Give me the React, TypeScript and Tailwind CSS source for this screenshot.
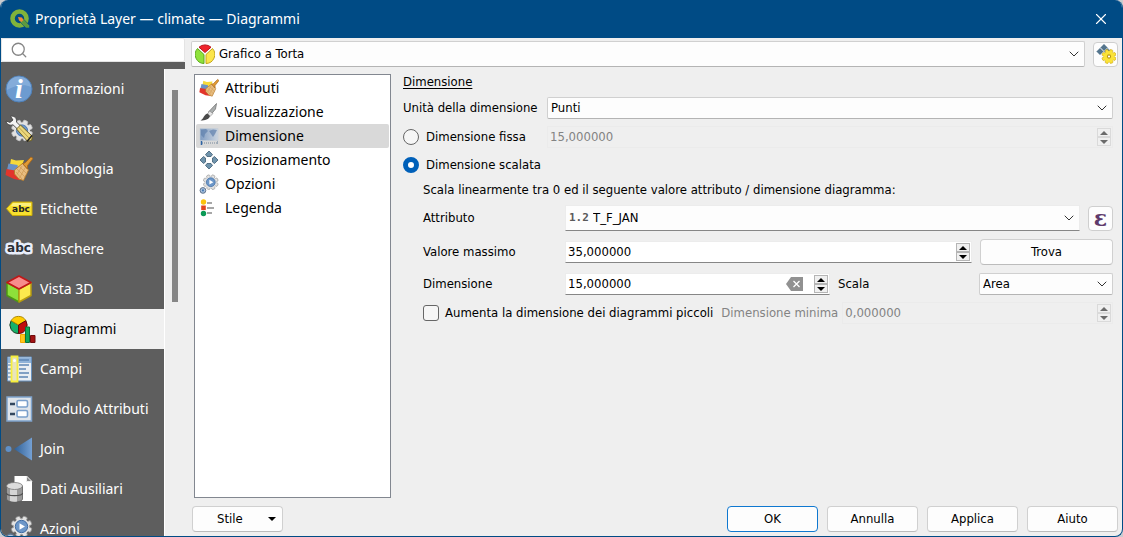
import React, { useState } from 'react';
import { ChevronDown, Search, X } from 'lucide-react';

type IconProps = { className?: string };

type NavItem = {
  label: string;
  icon: React.ReactNode;
};

function InfoIcon() {
  return (
    <svg viewBox="0 0 28 28" className="size-7">
      <circle cx="14" cy="14" r="13" fill="#6d9bd0" stroke="#4f80b8" />
      <path d="M2 15a12 12 0 0 1 24-3c-6-3-16-2-24 3Z" fill="#8fb3de" opacity=".7" />
      <text x="14" y="23" textAnchor="middle" fill="#fff" className="font-['Liberation_Serif',serif] text-[28px] font-bold italic">i</text>
    </svg>
  );
}

const teeth = [0, 45, 90, 135, 180, 225, 270, 315];

function GearShape({ fill, stroke }: { fill: string; stroke: string }) {
  return (
    <g>
      {teeth.map((angle) => (
        <rect key={angle} x="-2.300" y="-10.500" width="4.600" height="5" rx="1.200" fill={fill} stroke={stroke} strokeWidth=".8" transform={`rotate(${angle + 22})`} />
      ))}
      <circle r="8" fill={fill} />
    </g>
  );
}

function SourceIcon() {
  return (
    <svg viewBox="0 0 28 28" className="size-7">
      <g transform="translate(17 15.500)">
        <GearShape fill="#e2e2e2" stroke="#c4c4c4" />
        <circle r="5.600" fill="#6d97c8" stroke="#4f7bb0" />
      </g>
      <path d="M5.500 1.200c4-.6 6.500 1.800 6 5.800l5 5-3 3-5.500-5.200C4.500 11 1.200 9 1 6l4 1.400 3-2.400Z" fill="#f4f4f4" stroke="#444" strokeWidth=".9" />
      <path d="m11.500 14 4-4 12 11.500-1 4-4 .8Z" fill="#ecd77c" stroke="#665a20" strokeWidth=".9" />
      <path d="m14 12.500 10.500 11" stroke="#b8a24a" strokeWidth="1" />
      <path d="m27 20.500-5 6" stroke="#222" strokeWidth="1.500" />
    </svg>
  );
}

function BrushIcon({ className = 'size-7' }: IconProps) {
  return (
    <svg viewBox="0 0 28 28" className={className}>
      <path d="m6 4 5 1.500 8-.5-2 5.500-4 3L5 9.500Z" fill="#f6d93a" />
      <path d="m3.500 8.500 9 1.500.5 3-3 4.500-8-2.500Z" fill="#6a92c6" />
      <path d="m1.500 14 8.500 1.500 7 9-3 .5-5-1L.5 20Z" fill="#e2352b" />
      <path d="m9.500 15 8-6.500 6 6.500-5 10.500-4.500-1.500-4.500-5Z" fill="#e8bd80" stroke="#b77a28" strokeWidth=".9" />
      <path d="m12 14 8 8m-5.500-10.500L22 19m-10 .5 5-8.500m-2.500 12L20 13M11 17l6 7" stroke="#cf9a52" strokeWidth=".7" />
      <path d="m17.500 8.500 2.500-.5 6-6 2 1.500-5.500 7v3.500Z" fill="#e09a35" stroke="#a9691c" strokeWidth=".9" />
    </svg>
  );
}

function LabelIcon() {
  return (
    <svg viewBox="0 0 28 28" className="size-7">
      <path d="M7.500 7h19.500v13.500H7.500L1.500 13.700Z" fill="#f7df2e" stroke="#c8a90a" strokeWidth="1" />
      <path d="M8 8h18v3H6Z" fill="#fcf07c" />
      <text x="16" y="17" textAnchor="middle" fill="#222" className="font-['DejaVu_Sans',sans-serif] text-[9px] font-bold">abc</text>
    </svg>
  );
}

function MaskIcon() {
  return (
    <svg viewBox="0 0 28 28" className="size-7 overflow-visible">
      <text x="14" y="17" textAnchor="middle" fill="#2b2f36" stroke="#e9eefb" strokeWidth="5" strokeLinejoin="round" paintOrder="stroke" className="font-['DejaVu_Sans',sans-serif] text-[12px] font-bold">abc</text>
    </svg>
  );
}

function CubeIcon() {
  return (
    <svg viewBox="0 0 28 28" className="size-7" strokeLinejoin="round">
      <path d="m2 7.500 12 6.500v13L2 20.500Z" fill="#8ee03a" stroke="#4c9a12" strokeWidth="1.500" />
      <path d="m26 7.500-12 6.500v13l12-6.500Z" fill="#fbe94e" stroke="#b79b10" strokeWidth="1.500" />
      <path d="m14 1 12 6.500L14 14 2 7.500Z" fill="#f78c8c" stroke="#c01818" strokeWidth="1.700" />
    </svg>
  );
}

function DiagramIcon() {
  return (
    <svg viewBox="0 0 28 28" className="size-7">
      <path d="M10.500 10V18.500A8.500 8.500 0 0 1 3.100 5.700Z" fill="#17b169" stroke="#1c3d24" strokeWidth="1" />
      <path d="M10.500 10 3.100 5.700a8.500 8.500 0 0 1 14.800 0Z" fill="#ffcc00" stroke="#b08a00" strokeWidth="1" />
      <path d="M10.500 10 17.900 5.700A8.500 8.500 0 0 1 10.500 18.500Z" fill="#c00d0d" stroke="#5b0a0a" strokeWidth="1" />
      <path d="M12.500 19.500h4.500V27.500h-4.500Z" fill="#ffc61a" stroke="#f0a800" />
      <path d="M17.500 12h4V27.500h-4Z" fill="#0fa958" stroke="#0a7039" />
      <path d="M22.500 20.500h4.500v7h-4.500Z" fill="#a31212" stroke="#6f0c0c" />
    </svg>
  );
}

function FieldsIcon() {
  return (
    <svg viewBox="0 0 28 28" className="size-7">
      <path d="M2.500 2h24v24h-24Z" fill="#e9eef3" stroke="#6991bd" />
      <path d="M3 2.500h23V8H3Z" fill="#8fb2d8" />
      <path d="M14 5h10M14 10h10M14 14h7M14 18h10M14 22h9" stroke="#5d86b5" strokeWidth="1.400" />
      <path d="M3 10h3m-3 4h3m-3 4h3m-3 4h3" stroke="#7d9dc0" strokeWidth="1.300" />
      <path d="M6.500 1.500h6v25h-6Z" fill="#e8e4bd" stroke="#f7ee3c" strokeWidth="1.800" />
      <circle cx="9.500" cy="5.500" r="1.500" fill="#fff" />
    </svg>
  );
}

function FormIcon() {
  return (
    <svg viewBox="0 0 28 28" className="size-7">
      <path d="M2 2h24.500v24H2Z" fill="#dfe4ea" stroke="#7fa3cc" strokeWidth="1.500" />
      <rect x="12" y="5.500" width="10.500" height="6.500" rx="1.500" fill="#fff" stroke="#7ba0cc" strokeWidth="1.600" />
      <rect x="12" y="15.500" width="10.500" height="6.500" rx="1.500" fill="#fff" stroke="#7ba0cc" strokeWidth="1.600" />
      <path d="M5 9h5M5 19h5" stroke="#33475f" strokeWidth="2.400" />
    </svg>
  );
}

function JoinIcon() {
  return (
    <svg viewBox="0 0 28 28" className="size-7">
      <defs>
        <linearGradient id="join" x1="0" x2="1">
          <stop offset="0" stopColor="#2f5f95" />
          <stop offset="1" stopColor="#74a0d4" />
        </linearGradient>
      </defs>
      <path d="M9 14 27 2.500v23Z" fill="url(#join)" />
      <circle cx="3.500" cy="14" r="3" fill="#5f90c8" />
    </svg>
  );
}

function DataIcon() {
  return (
    <svg viewBox="0 0 28 28" className="size-7">
      <path d="M9.500 1h12l5.500 5.500V26H9.500Z" fill="#fff" />
      <path d="M21.500 1v5.500H27Z" fill="#888" stroke="#eee" />
      <path d="M1.500 11v13c0 4 16 4 16 0V11Z" fill="#999" stroke="#5a5a5a" strokeWidth=".8" />
      <path d="M5 12v14c2 .8 5 .9 7 .5V12Z" fill="#d4d4d4" />
      <path d="M1.500 18c0 3.500 16 3.500 16 0" fill="none" stroke="#4f4f4f" strokeWidth="1.200" />
      <ellipse cx="9.500" cy="11" rx="8" ry="3.500" fill="#dcdcdc" stroke="#777" strokeWidth=".8" />
    </svg>
  );
}

function ActionIcon({ className = 'size-7' }: IconProps) {
  return (
    <svg viewBox="0 0 28 28" className={className}>
      <g transform="translate(16.500 11.500)">
        <GearShape fill="#e2e2e2" stroke="#8e8e8e" />
        <circle r="6.200" fill="#6d97c8" stroke="#3f6ca3" />
        <path d="M-2-3.300 3.500 0-2 3.300Z" fill="#fff" />
      </g>
      <circle cx="5.500" cy="23" r="4" fill="#a8c2df" stroke="#60728a" strokeWidth="1.400" />
      <circle cx="5.500" cy="23" r="1.500" fill="#4779b3" />
    </svg>
  );
}

function PaintbrushIcon() {
  return (
    <svg viewBox="0 0 20 20" className="size-5">
      <path d="M17.500 1.500 9.500 10l2.500 2.500 4.500-5.500Z" fill="#a9adad" stroke="#777" strokeWidth=".8" />
      <path d="m10.500 9 3.500 2.500-3 3-2.500-2.500Z" fill="#e5e5e5" stroke="#888" strokeWidth=".6" />
      <path d="M8.500 11.500 11 14c-1 3.500-5 4.500-9.500 4.500 3-1.500 3.500-6 7-7Z" fill="#4a4a4a" />
    </svg>
  );
}

function SizeIcon() {
  return (
    <svg viewBox="0 0 20 20" className="size-5">
      <defs>
        <linearGradient id="sea" x1="0" x2="1">
          <stop offset="0" stopColor="#7f9cc2" />
          <stop offset="1" stopColor="#ccd5e0" />
        </linearGradient>
      </defs>
      <path d="M1 2.500h18v12H1Z" fill="url(#sea)" stroke="#c3ccd6" strokeWidth=".6" />
      <path d="m2 4 5-1 2 2-3 3-1 4-3-3Zm8 1 4-1.500 4 .5-2 4-2 3-2-3Z" fill="#5f80ac" opacity=".7" />
      <path d="M3 17h15" stroke="#76879a" strokeDasharray="1 1" />
      <path d="M2.500 15v4" stroke="#2f64a5" strokeWidth="1.500" />
      <path d="M18.500 15v3" stroke="#9ba9b8" />
    </svg>
  );
}

function MoveIcon() {
  return (
    <svg viewBox="0 0 20 20" className="size-5" fill="#6f93ab" stroke="#3f5d73" strokeWidth=".8">
      <path d="m10 1 3.500 3.500-1.500 2H8l-1.500-2Z" />
      <path d="m10 19 3.500-3.500-1.500-2H8l-1.500 2Z" />
      <path d="m1 10 3.500-3.500 2 1.500v4l-2 1.500Z" />
      <path d="m19 10-3.500-3.500-2 1.500v4l2 1.500Z" />
    </svg>
  );
}

function LegendIcon() {
  return (
    <svg viewBox="0 0 20 20" className="size-5">
      <path d="M8 5h5M8 10h7M8 15h5" stroke="#8a8a8a" strokeWidth="1.300" />
      <circle cx="4.500" cy="4" r="2.700" fill="#fbc30c" />
      <rect x="2.200" y="7.500" width="4.600" height="4.600" fill="#e1451f" />
      <circle cx="4.500" cy="15.500" r="2.700" fill="#0c9a57" />
    </svg>
  );
}

function PieIcon() {
  return (
    <svg viewBox="0 0 20 20" className="size-5">
      <path d="M9 10.500V19.500A9 9 0 0 1 2.500 4.500Z" fill="#8fe23b" stroke="#5ca91c" />
      <path d="M11 10.500V19.500A9 9 0 0 0 17.500 4.500Z" fill="#fbe54a" stroke="#c3a51a" />
      <path d="m10 8.500-6-5.300a9 9 0 0 1 12 0Z" fill="#f0242c" stroke="#b8141c" />
    </svg>
  );
}

function DefinedGearIcon() {
  return (
    <svg viewBox="0 0 20 20" className="size-5">
      <path d="m8 0 3.500 3.500L8 7 4.500 3.500ZM4 4l3.500 3.500L4 11 .5 7.500Zm7.500 0L15 7.500 11.500 11 8 7.500Z" fill="#54758d" stroke="#a4b5c2" strokeWidth=".7" />
      <g transform="translate(13 12.500) scale(.68)">
        <GearShape fill="#fbe337" stroke="#c8a30e" />
        <circle r="2.400" fill="#fff" stroke="#b9980f" strokeWidth="1.500" />
      </g>
    </svg>
  );
}

function Logo() {
  return (
    <svg viewBox="0 0 20 20" className="size-5">
      <circle cx="9.500" cy="9.500" r="7" fill="none" stroke="#80b33b" strokeWidth="4.600" />
      <path d="m10.500 10.500 3-.5 6 6.500V19h-3.500L10 13Z" fill="#5d9a3f" stroke="#004b85" strokeWidth=".6" />
      <path d="m8 8 4 .5 1.500 2.500-2 2L9 11.500Z" fill="#f08a36" />
    </svg>
  );
}

const navItems: NavItem[] = [
  { label: 'Informazioni', icon: <InfoIcon /> },
  { label: 'Sorgente', icon: <SourceIcon /> },
  { label: 'Simbologia', icon: <BrushIcon /> },
  { label: 'Etichette', icon: <LabelIcon /> },
  { label: 'Maschere', icon: <MaskIcon /> },
  { label: 'Vista 3D', icon: <CubeIcon /> },
  { label: 'Diagrammi', icon: <DiagramIcon /> },
  { label: 'Campi', icon: <FieldsIcon /> },
  { label: 'Modulo Attributi', icon: <FormIcon /> },
  { label: 'Join', icon: <JoinIcon /> },
  { label: 'Dati Ausiliari', icon: <DataIcon /> },
  { label: 'Azioni', icon: <ActionIcon /> },
];

const sections: NavItem[] = [
  { label: 'Attributi', icon: <BrushIcon className="size-5" /> },
  { label: 'Visualizzazione', icon: <PaintbrushIcon /> },
  { label: 'Dimensione', icon: <SizeIcon /> },
  { label: 'Posizionamento', icon: <MoveIcon /> },
  { label: 'Opzioni', icon: <ActionIcon className="size-5" /> },
  { label: 'Legenda', icon: <LegendIcon /> },
];

type SelectProps = {
  id?: string;
  label?: string;
  value: string;
  icon?: React.ReactNode;
  className?: string;
  boxClass?: string;
};

function Select({ id, label, value, icon, className = '', boxClass = 'h-[22px] rounded-xs border border-[#d0d0d0] border-b-[#b4b4b4] pl-[3px]' }: SelectProps) {
  return (
    <div className={`relative ${className}`}>
      <select id={id} aria-label={label} className={`block w-full appearance-none bg-[#fdfdfd] pr-6 outline-none ${boxClass}`}>
        <option>{value}</option>
      </select>
      {icon && <span className="pointer-events-none absolute inset-y-0 left-1 flex items-center">{icon}</span>}
      <ChevronDown className="pointer-events-none absolute inset-y-0 right-[3px] my-auto size-4 text-[#333]" strokeWidth={1.5} />
    </div>
  );
}

type SpinProps = {
  id?: string;
  label?: string;
  value: string;
  disabled?: boolean;
  clearable?: boolean;
  className?: string;
};

function Spin({ id, label, value, disabled, clearable, className = '' }: SpinProps) {
  const [text, setText] = useState(value);
  const arrow = `flex h-[9px] w-3.5 items-center justify-center border ${disabled ? 'border-[#dadada] text-[#6b6b6b]' : 'border-[#b5b5b5] text-black'} bg-[#f0f0f0]`;

  return (
    <div className={`flex h-[22px] items-center border ${disabled ? 'border-[#ebebeb]' : 'border-[#ececec] border-b-[#868686] bg-white'} ${className}`}>
      <input
        id={id}
        aria-label={label}
        value={text}
        disabled={disabled}
        onChange={(e) => setText(e.target.value)}
        className="w-0 min-w-0 flex-1 bg-transparent pl-0.5 outline-none disabled:text-[#838383]"
      />
      {clearable && (
        <button type="button" aria-label="Cancella" onClick={() => setText('')} className="mr-2.5">
          <svg viewBox="0 0 18 14" className="h-3.5 w-[18px]">
            <path d="M5 0h12v14H5L0 7Z" fill="#919191" />
            <path d="m7.500 4 6 6m0-6-6 6" stroke="#fff" strokeWidth="1.300" />
          </svg>
        </button>
      )}
      <div className="mr-px flex flex-col">
        <button type="button" aria-label="Aumenta" disabled={disabled} className={arrow}>
          <svg viewBox="0 0 8 4" className="h-1 w-2"><path d="m4 0 4 4H0Z" fill="currentColor" /></svg>
        </button>
        <button type="button" aria-label="Diminuisci" disabled={disabled} className={arrow}>
          <svg viewBox="0 0 8 4" className="h-1 w-2"><path d="m4 4 4-4H0Z" fill="currentColor" /></svg>
        </button>
      </div>
    </div>
  );
}

function Button({ children, className = 'w-[91px]', primary }: { children: React.ReactNode; className?: string; primary?: boolean }) {
  return (
    <button type="button" className={`h-[26px] rounded-sm border bg-[#fdfdfd] ${primary ? 'border-[#0f78d0]' : 'border-[#d0d0d0] border-b-[#bcbcbc]'} ${className}`}>
      {children}
    </button>
  );
}

export default function App() {
  const [page, setPage] = useState('Diagrammi');
  const [section, setSection] = useState('Dimensione');
  const [mode, setMode] = useState('scaled');

  return (
    <div className="h-screen bg-[#c9ccd0]">
      <div className="flex h-full flex-col overflow-hidden rounded-lg border border-t-0 border-[#004b85] bg-[#efefef] font-['DejaVu_Sans_Condensed','DejaVu_Sans',sans-serif] text-[13px] leading-4 text-black">
        <header className="flex h-[38px] shrink-0 items-center bg-[#004b85] pr-3 pl-[9px] font-['Noto_Sans',sans-serif] text-[14px] text-white">
          <Logo />
          <h1 className="ml-[5px] flex-1">Proprietà Layer — climate — Diagrammi</h1>
          <button aria-label="Chiudi">
            <X className="size-[18px]" strokeWidth={1.5} />
          </button>
        </header>

        <div className="flex min-h-0 flex-1">
          <aside className="flex w-[184px] shrink-0 flex-col">
            <label className="flex h-6 shrink-0 items-center rounded-xs border border-[#e4e4e4] bg-white pl-2">
              <Search className="size-[18px] text-[#868686]" strokeWidth={1.7} />
              <input aria-label="Cerca" className="ml-1 w-0 flex-1 outline-none" />
            </label>
            <div className="h-[7px] shrink-0 bg-[#5e5e5e]" />
            <div className="flex min-h-0 flex-1">
              <nav className="w-[163px] shrink-0 overflow-hidden bg-[#5e5e5e] font-['Noto_Sans',sans-serif] text-[14px]">
                {navItems.map((item) => (
                  <button
                    key={item.label}
                    onClick={() => setPage(item.label)}
                    className={`flex h-10 w-full items-center gap-[7px] text-left ${
                      item.label === page ? 'bg-[#f0f0f0] pl-[7px] text-black' : 'pl-1 text-white'
                    }`}
                  >
                    {item.icon}
                    {item.label}
                  </button>
                ))}
              </nav>
              <div className="flex-1 border-l border-white pt-[21px] pl-[7px]">
                <div className="h-[212px] w-1.5 bg-[#868686]" />
              </div>
            </div>
          </aside>

          <main className="flex min-w-0 flex-1 flex-col pr-1 pb-1 pl-1.5">
            <div className="mt-[3px] flex items-center gap-2">
              <Select
                label="Tipo di diagramma"
                value="Grafico a Torta"
                icon={<PieIcon />}
                className="flex-1"
                boxClass="h-[26px] rounded-xs border border-[#d0d0d0] border-b-[#b4b4b4] pl-[27px]"
              />
              <button aria-label="Sovrascrittura" className="flex size-[25px] items-center justify-center rounded-sm border border-[#cfcfcf] bg-[#fdfdfd]">
                <DefinedGearIcon />
              </button>
            </div>

            <div className="mt-[7px] flex min-h-0 flex-1">
              <div className="ml-[3px] w-[197px] shrink-0 border border-[#828790] bg-white p-px font-['Noto_Sans',sans-serif] text-[14px]">
                {sections.map((item) => (
                  <button
                    key={item.label}
                    onClick={() => setSection(item.label)}
                    className={`flex h-6 w-full items-center gap-1.5 rounded-xs pl-[3px] text-left ${item.label === section ? 'bg-[#d9d9d9]' : ''}`}
                  >
                    {item.icon}
                    {item.label}
                  </button>
                ))}
              </div>

              <form className="min-w-0 flex-1 pr-[5px] pl-3">
                <h2 className="underline underline-offset-2">{section}</h2>
                <div className="mt-[7px] flex items-center">
                  <label htmlFor="unit" className="w-36 shrink-0">Unità della dimensione</label>
                  <Select id="unit" value="Punti" className="flex-1" />
                </div>
                <div className="mt-[7px] flex items-center">
                  <label className="flex w-36 shrink-0 items-center gap-[7px]">
                    <input
                      type="radio"
                      name="mode"
                      checked={mode === 'fixed'}
                      onChange={() => setMode('fixed')}
                      className="size-4 appearance-none rounded-full border border-[#666] bg-[#f6f6f6] checked:border-5 checked:border-[#0060b9] checked:bg-white"
                    />
                    Dimensione fissa
                  </label>
                  <Spin label="Dimensione fissa" value="15,000000" disabled className="flex-1" />
                </div>
                <label className="mt-1.5 flex h-[22px] items-center gap-[7px]">
                  <input
                    type="radio"
                    name="mode"
                    checked={mode === 'scaled'}
                    onChange={() => setMode('scaled')}
                    className="size-4 appearance-none rounded-full border border-[#666] bg-[#f6f6f6] checked:border-5 checked:border-[#0060b9] checked:bg-white"
                  />
                  Dimensione scalata
                </label>

                <div className="pl-5">
                  <p className="mt-1.5">Scala linearmente tra 0 ed il seguente valore attributo / dimensione diagramma:</p>
                  <div className="mt-[7px] flex items-center">
                    <label htmlFor="attr" className="w-[142px] shrink-0">Attributo</label>
                    <Select
                      id="attr"
                      value="T_F_JAN"
                      icon={<span className="font-['DejaVu_Sans_Mono',monospace] text-[11px] font-bold text-[#5a5a5a]">1.2</span>}
                      className="flex-1"
                      boxClass="h-[26px] border border-[#ececec] border-b-[#868686] pl-[27px]"
                    />
                    <button type="button" aria-label="Espressione" className="ml-2 flex size-[25px] items-center justify-center rounded-sm border border-[#cfcfcf] bg-[#fdfdfd] font-['DejaVu_Serif',serif] text-[22px] leading-5 font-bold text-[#5f3a6b]">
                      ε
                    </button>
                  </div>
                  <div className="mt-2 flex items-center">
                    <label htmlFor="max" className="w-[142px] shrink-0">Valore massimo</label>
                    <Spin id="max" value="35,000000" className="flex-1" />
                    <Button className="ml-2 w-[133px]">Trova</Button>
                  </div>
                  <div className="mt-2 flex items-center">
                    <label htmlFor="size" className="w-[142px] shrink-0">Dimensione</label>
                    <Spin id="size" value="15,000000" clearable className="flex-1" />
                    <label htmlFor="scale" className="ml-2 w-[141px] shrink-0">Scala</label>
                    <Select id="scale" value="Area" className="w-[134px]" />
                  </div>
                  <div className="mt-[7px] flex items-center">
                    <label className="flex shrink-0 items-center gap-1.5">
                      <input type="checkbox" className="size-4 appearance-none rounded-[3px] border border-[#666] bg-[#f6f6f6] checked:bg-[#0060b9]" />
                      Aumenta la dimensione dei diagrammi piccoli
                    </label>
                    <label htmlFor="min" className="ml-2 shrink-0 text-[#838383]">Dimensione minima</label>
                    <Spin id="min" value="0,000000" disabled className="ml-1 flex-1" />
                  </div>
                </div>
              </form>
            </div>

            <footer className="mt-2 flex items-center gap-[9px] pl-px">
              <button className="flex h-[26px] w-[91px] items-center rounded-sm border border-[#d0d0d0] border-b-[#bcbcbc] bg-[#fdfdfd] pr-1.5 pl-6">
                <span className="flex-1 text-left">Stile</span>
                <svg viewBox="0 0 8 4" className="h-1 w-2"><path d="m4 4 4-4H0Z" /></svg>
              </button>
              <div className="flex-1" />
              <Button primary>OK</Button>
              <Button>Annulla</Button>
              <Button>Applica</Button>
              <Button>Aiuto</Button>
            </footer>
          </main>
        </div>
      </div>
    </div>
  );
}
